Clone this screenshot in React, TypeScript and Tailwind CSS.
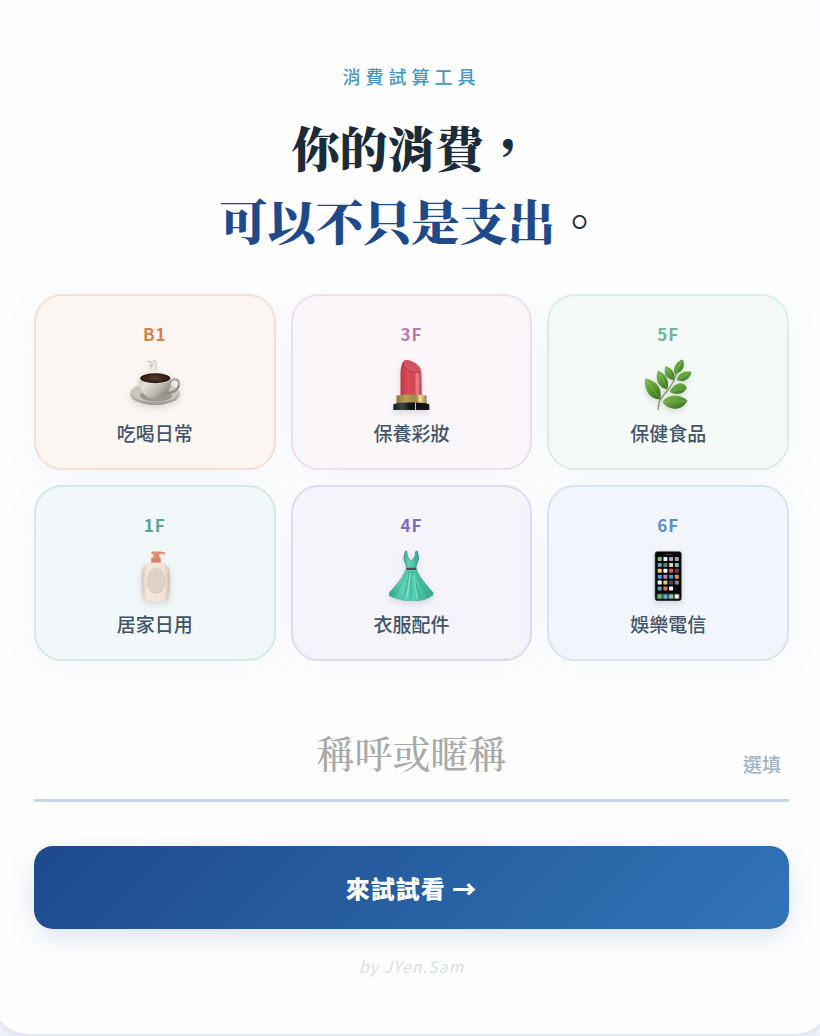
import { useState } from 'react';
import type { ReactNode } from 'react';

const CoffeeIcon = () => (
  <svg viewBox="0 0 52 52" className="size-[52px] drop-shadow-md" aria-hidden="true">
    <defs>
      <linearGradient id="cup" x1="0" x2="1" y1="0" y2="0.6">
        <stop offset="0" stopColor="#c9c6be" />
        <stop offset="0.3" stopColor="#e3e0da" />
        <stop offset="0.7" stopColor="#b9b6ae" />
        <stop offset="1" stopColor="#85827b" />
      </linearGradient>
      <linearGradient id="saucer" x1="0" x2="0" y1="0" y2="1">
        <stop offset="0" stopColor="#d0cdc6" />
        <stop offset="1" stopColor="#9f9b92" />
      </linearGradient>
      <radialGradient id="coffee">
        <stop offset="0" stopColor="#5a3c30" />
        <stop offset="1" stopColor="#2a1812" />
      </radialGradient>
    </defs>
    <path d="M19 4c2-2 4 0 3 2M20 8c2-2 4 0 5-3M24 3c2-1 4 1 3 3M22 11c-1-3 2-3 2-5M26 12c2-2 0-3 1-5" fill="none" stroke="#c4bfba" strokeWidth="1.3" strokeLinecap="round" opacity="0.8" />
    <ellipse cx="26" cy="36" rx="24.8" ry="11" fill="url(#saucer)" />
    <ellipse cx="26" cy="34.5" rx="24" ry="9.5" fill="#c9c6bf" />
    <ellipse cx="27" cy="38" rx="16" ry="5.5" fill="#9d9991" />
    <path d="M41 23.5c4-4 9.5-2 9 3.5-.4 4-5 7.5-11 8" fill="none" stroke="#8e8a82" strokeWidth="2.3" />
    <path d="M41 23.5c4-4 9.5-2 9 3.5" fill="none" stroke="#d2cfc9" strokeWidth="1" />
    <path d="M9.7 20c0 8 3 15 8 18.5 4 2.5 13 2.5 17 0 5-3.5 8-10.5 8-18.5z" fill="url(#cup)" />
    <ellipse cx="26.2" cy="19.8" rx="16.5" ry="6" fill="#f1efeb" />
    <ellipse cx="26.2" cy="20.2" rx="15" ry="5" fill="url(#coffee)" />
  </svg>
);

const LipstickIcon = () => (
  <svg viewBox="0 0 52 52" className="size-[52px] drop-shadow-md" aria-hidden="true">
    <defs>
      <linearGradient id="lip" x1="0" x2="1" y1="0" y2="0">
        <stop offset="0" stopColor="#b83946" />
        <stop offset="0.35" stopColor="#d94c58" />
        <stop offset="0.65" stopColor="#cf4653" />
        <stop offset="0.78" stopColor="#f0868b" />
        <stop offset="1" stopColor="#b63945" />
      </linearGradient>
      <linearGradient id="gold" x1="0" x2="1" y1="0" y2="0">
        <stop offset="0" stopColor="#8d7635" />
        <stop offset="0.3" stopColor="#b79f55" />
        <stop offset="0.65" stopColor="#a08640" />
        <stop offset="0.8" stopColor="#f2e2a4" />
        <stop offset="1" stopColor="#927938" />
      </linearGradient>
      <linearGradient id="base" x1="0" x2="1" y1="0" y2="0">
        <stop offset="0" stopColor="#18201e" />
        <stop offset="0.25" stopColor="#3d4542" />
        <stop offset="0.5" stopColor="#0c0f0f" />
        <stop offset="1" stopColor="#151a19" />
      </linearGradient>
    </defs>
    <path d="M15.5 39V17c0-7 1-15 6-15 6 0 14 5 14.5 11 .7 6 .7 15 .7 26z" fill="url(#lip)" />
    <path d="M18.5 5c1-4 6-2.5 10-.5 5 2.5 7.5 6.5 6.5 9-2 3-7 1.5-10.5-.5-4-2.3-6.5-5-6-8z" fill="#d4525d" />
    <path d="M18.5 6c.5 4 7 8.5 11.5 8.6 3 .1 4.5-.6 5-1.6" fill="none" stroke="#a93340" strokeWidth="0.7" />
    <path d="M11.5 37.5c8-1.500 21-1.500 30 0V46h-30z" fill="url(#gold)" />
    <path d="M8.300 46.500c2-1.300 6-2 18-2s16 .7 18 2V52h-36z" fill="url(#base)" />
    <path d="M30.500 44.500V52" stroke="#d9dcda" strokeWidth="0.9" />
  </svg>
);

const HerbIcon = () => (
  <svg viewBox="0 0 52 52" className="size-[52px] drop-shadow-md" aria-hidden="true">
    <defs>
      <linearGradient id="leaf" x1="0" x2="0.8" y1="0" y2="1">
        <stop offset="0" stopColor="#82bd52" />
        <stop offset="0.5" stopColor="#5d9f37" />
        <stop offset="1" stopColor="#3a7424" />
      </linearGradient>
    </defs>
    <path d="M16.3 51.5c0-4 .3-7 2-9.5 2.5-4 6-8 9-12 3-4 6-9 7-15" fill="none" stroke="#8d9871" strokeWidth="1.5" strokeLinecap="round" />
    <g fill="url(#leaf)">
      <path d="M3 20.5c9 1 18 8 15.3 21C7 41 2 32 3 20.5z" />
      <path d="M16 12.5c7 3 12 9 9.3 19-9-2-13-10-9.3-19z" />
      <path d="M23.5 8c5 1.5 10.5 6 8.5 14-8-1-11-6-8.5-14z" />
      <path d="M41 1.5c-6 1-10.5 7-8.5 15C41 14 43.5 8.5 41 1.5z" />
      <path d="M49.5 14c-6-1.5-14 .5-14.5 8.3 7 2.5 13-1.3 14.5-8.3z" />
      <path d="M45 30c-3-7-12-6.5-17.5 3.7 7 4 14 2.5 17.5-3.7z" />
      <path d="M45.5 42.5c-8-7-20-6.5-25 1.5 6 9 20 9.5 25-1.500z" />
    </g>
    <path d="M4 22l14 19M17 14l8.3 17M24.500 10l7.500 12M40 3l-7 13M48 15l-12.700 7M44 30.500l-16 3.200M44 43l-23 .7" fill="none" stroke="#a3cd76" strokeWidth="0.5" opacity="0.7" />
  </svg>
);

const LotionIcon = () => (
  <svg viewBox="0 0 52 52" className="size-[52px] drop-shadow-md" aria-hidden="true">
    <defs>
      <linearGradient id="bottle" x1="0" x2="1" y1="0" y2="0">
        <stop offset="0" stopColor="#d6c5b6" />
        <stop offset="0.2" stopColor="#f5e9dd" />
        <stop offset="0.8" stopColor="#f1e2d5" />
        <stop offset="1" stopColor="#d0bdad" />
      </linearGradient>
    </defs>
    <path d="M23.5 2.5h8l4.5.8v2L30.5 5v3l1 1v5h-9V9l2-1V5.5l-2.5-1z" fill="#e08c72" />
    <path d="M22.5 9.5h9V14h-9z" fill="#d97f66" />
    <path d="M19.5 14c4-.8 10.500-.8 14.500 0 5 1.500 6.700 5 7 11 .4 8 .2 16-1.300 23.500-.5 2.500-1.500 3.500-4 3.500H18c-2.500 0-3.500-1-4-3.500-1.500-7.500-1.700-15.500-1.300-23.500.3-6 1.800-9.500 6.800-11z" fill="url(#bottle)" />
    <ellipse cx="27" cy="32" rx="9.3" ry="12.7" fill="#d9c8be" />
    <ellipse cx="26.7" cy="31.7" rx="8.5" ry="12" fill="#e1d2c8" />
  </svg>
);

const DressIcon = () => (
  <svg viewBox="0 0 52 52" className="size-[52px] drop-shadow-md" aria-hidden="true">
    <defs>
      <linearGradient id="skirt" x1="0" x2="1" y1="0" y2="0">
        <stop offset="0" stopColor="#35a58d" />
        <stop offset="0.3" stopColor="#5fd3b9" />
        <stop offset="0.6" stopColor="#4fc9ad" />
        <stop offset="1" stopColor="#36a68e" />
      </linearGradient>
    </defs>
    <path d="M20.2 2.5C19 7 18.5 10 19.5 12c1.500 3 2.200 5 2 8h9.500c-.2-3 .5-5 2-8 1-2 .5-5-.7-9.500-.9-.7-1.500-.6-1.700 0 .3 4-1.500 7.500-4.400 9.500-2.900-2-4.700-5.500-4.300-9.500-.3-.6-.9-.7-1.700 0z" fill="url(#skirt)" stroke="#318f7b" strokeWidth="0.8" />
    <path d="M21.3 20h9.900c3.500 8 9 15 17 23.500l-.5 3c-2 .5-3 1.500-4 2.500-2 0-3 .5-4 1.700-2 0-4 .2-5.500 1-3 .5-6-.2-8-.2-3 .5-5 .3-7.500-.3-2 .2-3-.7-5-1.200-2 0-3-.8-4-1.500-2 .3-3-.8-5.200-1.500l-.2-3.500C12 36 17.500 28 21.300 20z" fill="url(#skirt)" stroke="#318f7b" strokeWidth="0.4" />
    <path d="M22 22C19 32 14 39 9 47M24 22c-1 11-3 20-6.500 28M26 22c.5 11 0 20-.5 29M28 22c2 11 5 20 8 28M30.500 22c4 11 8 18 13.500 26" fill="none" stroke="#2f9a84" strokeWidth="0.8" opacity="0.75" />
    <path d="M25 24c0 9-2 18-3.500 25M29 26c1 9 2 17 3 24" fill="none" stroke="#91ead5" strokeWidth="1.3" opacity="0.7" />
    <path d="M21.5 18.7h9.500l.3 2.200H21.200z" fill="#4a5260" />
  </svg>
);

const APP_ROWS = [
  ['#7ac47f', '#f3f3f3', '#c99ab8', '#9aa59f'],
  ['#5ba3d9', '#6c7a70', '#e5cfc5', '#72c2c9'],
  ['#f0d264', '#ffffff', '#e2575a', '#664249'],
  ['#4a9be0', '#c474c9', '#4e8edb', '#d99555'],
  ['#f7f7f7', '#dccb6a', '#4b4b50', '#8c8378'],
  ['#5b9fd0', '#df6c5c', '#ffffff'],
];

const PhoneIcon = () => (
  <svg viewBox="0 0 52 52" className="size-[52px] drop-shadow-md" aria-hidden="true">
    <rect x="12.7" y="2.3" width="27" height="49.7" rx="3" fill="#4e4543" />
    <rect x="13.5" y="3.1" width="25.4" height="48.1" rx="2.3" fill="#050607" />
    <path d="M23 5.5h7" stroke="#343638" strokeWidth="1" strokeLinecap="round" />
    {APP_ROWS.map((row, r) =>
      row.map((color, c) => (
        <rect key={`${r}-${c}`} x={15.7 + c * 5.7} y={8 + r * 5.9} width="4" height="4" rx="0.7" fill={color} />
      ))
    )}
    <rect x="14.5" y="44.5" width="23.4" height="5.8" rx="1" fill="#3a4747" />
    {['#67bb7a', '#5aaed0', '#8fca93', '#f5f5f5'].map((color, c) => (
      <rect key={color} x={15.7 + c * 5.7} y="45.4" width="4" height="4" rx="0.7" fill={color} />
    ))}
  </svg>
);

type Floor = {
  floor: string;
  name: string;
  icon: ReactNode;
  card: string;
  text: string;
};

const floors: Floor[] = [
  { floor: 'B1', name: '吃喝日常', icon: <CoffeeIcon />, card: 'bg-[#fcf6f3] border-[#f5dfd0]', text: 'text-[#cf8350]' },
  { floor: '3F', name: '保養彩妝', icon: <LipstickIcon />, card: 'bg-[#faf6fa] border-[#f0dfeb]', text: 'text-[#b87aaa]' },
  { floor: '5F', name: '保健食品', icon: <HerbIcon />, card: 'bg-[#f5f9f8] border-[#daeee6]', text: 'text-[#6cb894]' },
  { floor: '1F', name: '居家日用', icon: <LotionIcon />, card: 'bg-[#f2f8f9] border-[#d3e9e7]', text: 'text-[#58a49d]' },
  { floor: '4F', name: '衣服配件', icon: <DressIcon />, card: 'bg-[#f5f4fb] border-[#dfdbef]', text: 'text-[#7c6cb8]' },
  { floor: '6F', name: '娛樂電信', icon: <PhoneIcon />, card: 'bg-[#f2f6fc] border-[#d6e3f0]', text: 'text-[#5c8fc6]' },
];

const App = () => {
  const [nickname, setNickname] = useState('');

  return (
    <div className="min-h-screen overflow-hidden bg-[#edf1f9] font-[family-name:'Noto_Sans_CJK_TC',sans-serif]">
      <main
        lang="zh-Hant"
        className="-ml-2 -mr-[11px] rounded-b-[37px] bg-[#fefefe] bg-[radial-gradient(circle_at_top_right,#fbfcff,#fefefe_120px)] px-[42px] pb-[54px] pt-[62px] shadow-[0_2px_8px_rgba(30,60,120,0.08)]"
      >
        <header className="text-center">
          <p className="text-[18px] font-medium leading-7 tracking-[5px] text-[#4596c4]">消費試算工具</p>
          <h1 className="mt-5 font-[family-name:'Noto_Serif_CJK_TC','Noto_Serif_TC','Noto_Sans_CJK_TC',serif] text-5xl font-black leading-[73px] text-[#1c2b3a]">
            你的消費，
            <br />
            <span className="text-[#1e4a8c]">可以不只是支出</span>。
          </h1>
        </header>

        <ul className="mt-[38px] grid grid-cols-3 gap-[15px]">
          {floors.map((item) => (
            <li
              key={item.floor}
              className={`flex flex-col items-center rounded-[28px] border-2 pb-[21px] pt-[26px] shadow-[0_8px_40px_rgba(60,110,190,0.05)] ${item.card}`}
            >
              <span className={`text-[17px] font-bold leading-6 tracking-[1px] ${item.text}`}>{item.floor}</span>
              <span className="mt-3">{item.icon}</span>
              <span className="mt-[9px] text-[19px] font-medium leading-7 text-[#425468]">{item.name}</span>
            </li>
          ))}
        </ul>

        <form onSubmit={(e) => e.preventDefault()}>
          <div className="relative mt-[46px]">
            <input
              id="nickname"
              type="text"
              value={nickname}
              onChange={(e) => setNickname(e.target.value)}
              placeholder="稱呼或暱稱"
              className="block h-[95px] w-full border-b-[3px] border-[#c5d7e8] bg-transparent pb-1 text-center font-[family-name:'Noto_Serif_CJK_TC','Noto_Serif_TC','Noto_Sans_CJK_TC',serif] text-[38px] font-medium text-[#1c2b3a] outline-none placeholder:text-[#a9a9a9]"
            />
            <label htmlFor="nickname" className="absolute bottom-6 right-2 text-[19px] font-medium leading-7 text-[#a0b1c6]">
              選填
            </label>
          </div>
          <button
            type="submit"
            className="mt-11 h-[83px] w-full rounded-[19px] bg-linear-135 from-[#1e4a8c] to-[#3175b7] text-2xl font-black tracking-[1px] text-white shadow-[0_8px_28px_rgba(30,74,140,0.15)]"
          >
            來試試看 →
          </button>
        </form>

        <p className="mt-[23px] text-center text-base italic leading-7 tracking-[1px] text-[#d5e0ea]">by JYen.Sam</p>
      </main>
    </div>
  );
};

export default App;
